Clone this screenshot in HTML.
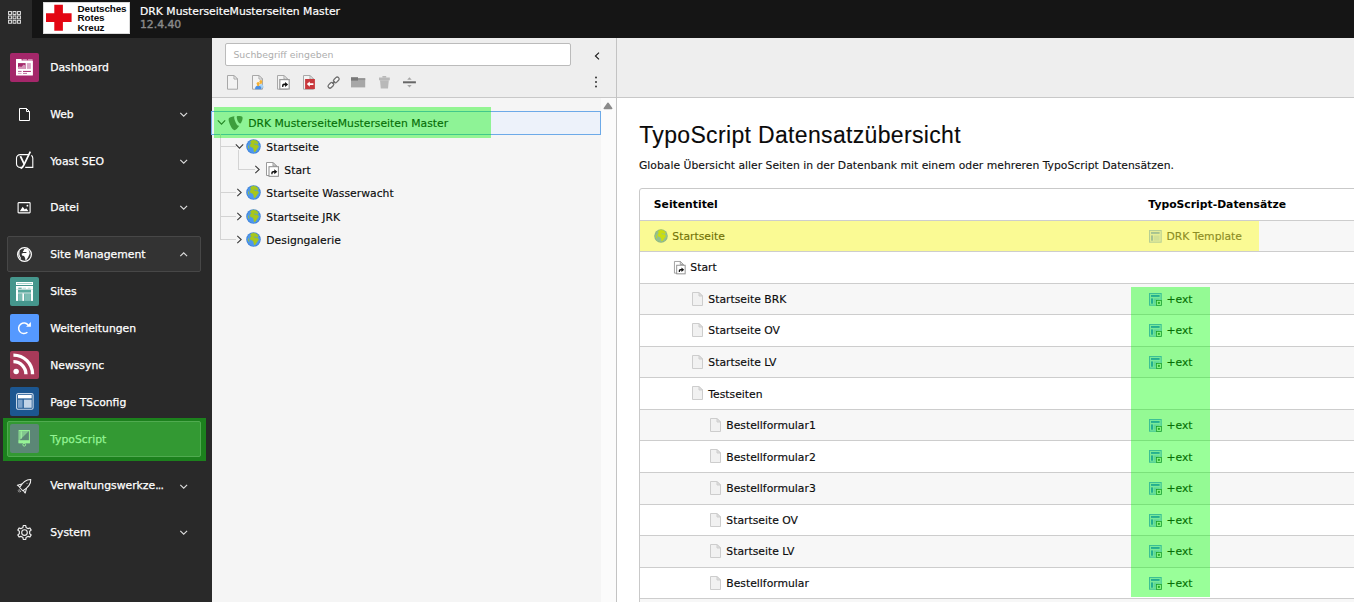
<!DOCTYPE html>
<html lang="de">
<head>
<meta charset="utf-8">
<title>TypoScript Datensatzübersicht</title>
<style>
*{box-sizing:border-box;margin:0;padding:0}
html,body{width:1354px;height:602px;overflow:hidden;background:#fff}
body{font-family:"DejaVu Sans","Liberation Sans",sans-serif;font-size:10.8px;color:#000;position:relative}
.abs{position:absolute}
svg{display:block;overflow:visible}
.hl{position:absolute;pointer-events:none}
#topbar{position:absolute;left:0;top:0;width:1354px;height:38px;background:#151515}
#toggle{position:absolute;left:0;top:0;width:32px;height:38px;background:#292929}
#logo{position:absolute;left:43px;top:2px;width:87px;height:32px;background:#fff;border:1px solid #dadada}
#logo .txt{position:absolute;left:33.600px;top:1.1px;font-family:"Liberation Sans",sans-serif;font-weight:700;font-size:9.9px;line-height:9.450px;color:#0a0a0a;white-space:nowrap;letter-spacing:-.12px}
#sitename{position:absolute;left:140px;top:4.500px;color:#fff;line-height:13px;white-space:nowrap;-webkit-text-stroke:.2px #fff}
#version{position:absolute;left:140px;top:17.800px;color:#8a8a8a;line-height:13px;-webkit-text-stroke:.4px #8a8a8a}
#sidebar{position:absolute;left:0;top:38px;width:212px;height:564px;background:#292929}
.mi{position:absolute;left:0;width:212px;height:28.700px;white-space:nowrap}
.mi .ic{position:absolute;left:10.100px;top:0;width:28.800px;height:28.700px;border-radius:2px}
.mi .lb{position:absolute;left:50.200px;top:1.300px;line-height:28.700px;-webkit-text-stroke:.25px currentColor}
#smbox{position:absolute;left:7px;top:198.200px;width:194px;height:35.400px;background:#333;border:1px solid #474747;border-radius:2px}
#actbox{position:absolute;left:7px;top:383px;width:194px;height:35.600px;background:#339933;border:1px solid #50ab50;border-radius:2px}
#tree{position:absolute;left:212px;top:38px;width:405px;height:564px;background:#f5f5f5;border-right:1px solid #c3c3c3}
#treetop{position:absolute;left:0;top:0;width:404px;height:59.500px;background:#eeeeee;border-bottom:1px solid #c8c8c8}
#search{position:absolute;left:13px;top:5.300px;width:346px;height:22.400px;background:#fff;border:1px solid #bbb;border-radius:2px;color:#adadad;font-size:9.350px;line-height:21.600px;padding-left:7.400px}
.trow{position:absolute;height:23px;line-height:23px;white-space:nowrap;color:#0c0c0c;-webkit-text-stroke:.15px currentColor}
#content{position:absolute;left:617px;top:38px;width:737px;height:564px;background:#fff}
#dochead{position:absolute;left:0;top:0;width:737px;height:59.500px;background:#eeeeee;border-bottom:1px solid #c8c8c8}
h1{position:absolute;left:22.200px;top:82.700px;font-family:"Liberation Sans",sans-serif;font-weight:400;font-size:23px;line-height:28px;color:#0a0a0a;white-space:nowrap;letter-spacing:.34px;-webkit-text-stroke:.12px #0a0a0a}
#sub{position:absolute;left:22px;top:121px;line-height:14px;white-space:nowrap;color:#111;-webkit-text-stroke:.12px currentColor}
#tbl{position:absolute;left:22px;top:150px;width:730px;height:460px;border:1px solid #c9c9c9;border-radius:3px 0 0 0;background:#fff;overflow:hidden}
.th{position:absolute;top:0;line-height:31.400px;font-weight:700;white-space:nowrap;color:#000}
.r{position:absolute;left:0;width:728px;height:32px;border-top:1px solid #cdcdcd;white-space:nowrap;background:#fff}
.r.odd{background:#f7f7f7}
.r .t{position:absolute;top:0;line-height:31.400px;color:#0c0c0c;-webkit-text-stroke:.15px currentColor}
</style>
</head>
<body>
<div id="topbar">
  <div id="toggle"><svg class="abs" style="left:8px;top:11px" width="14" height="14" viewBox="0 0 14 14" ><rect x="0.55" y="0.55" width="2.900" height="2.900" fill="#383838" stroke="#e2e2e2" stroke-width=".95"/><rect x="0.55" y="4.95" width="2.900" height="2.900" fill="#383838" stroke="#e2e2e2" stroke-width=".95"/><rect x="0.55" y="9.35" width="2.900" height="2.900" fill="#383838" stroke="#e2e2e2" stroke-width=".95"/><rect x="5.05" y="0.55" width="2.900" height="2.900" fill="#383838" stroke="#e2e2e2" stroke-width=".95"/><rect x="5.05" y="4.95" width="2.900" height="2.900" fill="#383838" stroke="#e2e2e2" stroke-width=".95"/><rect x="5.05" y="9.35" width="2.900" height="2.900" fill="#383838" stroke="#e2e2e2" stroke-width=".95"/><rect x="9.55" y="0.55" width="2.900" height="2.900" fill="#383838" stroke="#e2e2e2" stroke-width=".95"/><rect x="9.55" y="4.95" width="2.900" height="2.900" fill="#383838" stroke="#e2e2e2" stroke-width=".95"/><rect x="9.55" y="9.35" width="2.900" height="2.900" fill="#383838" stroke="#e2e2e2" stroke-width=".95"/></svg></div>
  <div id="logo"><svg class="abs" style="left:1px;top:1px" width="27" height="27" viewBox="0 0 27 27" ><path d="M9.300 0.700h8.600v8.500h8.700v8.800h-8.700v8.800H9.300v-8.800H1v-8.800h8.300z" fill="#e30613" transform="translate(0,0)"/></svg><div class="txt">Deutsches<br><span style="position:relative;top:-1px">Rotes</span><br>Kreuz</div></div>
  <div id="sitename">DRK MusterseiteMusterseiten Master</div>
  <div id="version">12.4.40</div>
</div>
<div id="sidebar">
<div class="mi" style="top:14.950000000000003px"><div class="ic" style="background:#a4276a;"><svg class="abs" style="left:5.9px;top:6px" width="17" height="17" viewBox="0 0 17 17" ><rect x="0" y="0" width="5.600" height="2" fill="#fff"/><rect x="6.600" y="0.300" width="4.300" height="1" fill="#e3b6cf"/><rect x="12" y="0.300" width="4.600" height="1" fill="#e3b6cf"/><rect x="0" y="1.600" width="16.900" height="15" rx=".5" fill="#fff"/><rect x="2" y="4.100" width="7.600" height="5.800" fill="#a4276a"/><path d="M2 9.900V8.200L3.600 7.300 5.200 8 7.700 5.600 9.600 6.600V9.900Z" fill="#d596b9"/><rect x="10.900" y="4.100" width="4" height="5.800" fill="#dba6c6"/><rect x="2" y="11.900" width="3.600" height="1" fill="#b55a90"/><rect x="7" y="11.900" width="7.900" height="1" fill="#a4276a"/><rect x="2" y="13.900" width="3.600" height="1" fill="#dba6c6"/><rect x="7" y="13.900" width="4" height="1" fill="#c070a0"/></svg></div><div class="lb" style="color:#fff;margin-top:0px">Dashboard</div></div>
<div class="mi" style="top:61.650000000000006px"><div class="ic" style=""><svg class="abs" style="left:8.9px;top:8.6px" width="12" height="14" viewBox="0 0 12 14" ><path d="M0.500 0.500H7.500L10.500 3.500V12.500H0.500Z" fill="none" stroke="#fff" stroke-width="1"/><path d="M7.500 0.500V3.500H10.500" fill="none" stroke="#fff" stroke-width="1"/></svg></div><div class="lb" style="color:#fff;margin-top:0px">Web</div></div><svg class="abs" style="left:178.5px;top:72.85000000000001px" width="10" height="8" viewBox="0 0 10 8" ><path d="M1.300 1.800L4.700 5.200L8.100 1.800" fill="none" stroke="#dcdcdc" stroke-width="1.150"/></svg>
<div class="mi" style="top:108.35px"><div class="ic" style=""><svg class="abs" style="left:4.9px;top:3.7px" width="19" height="20" viewBox="0 0 19 20" ><path d="M13.300 4.600H5.200a3.700 3.700 0 0 0-3.700 3.700V13.700a3.700 3.700 0 0 0 3.700 3.700H6.300M10.200 17.400H17.800V8.300c0-1.400-.5-2.400-1.400-3.100" fill="none" stroke="#fff" stroke-width="1.100"/><path d="M5.400 6.200L9.100 13.900" fill="none" stroke="#fff" stroke-width="1.800"/><path d="M15.300 1.600L9.200 14.300C8.300 16.300 7.500 17.600 5.600 18.500" fill="none" stroke="#fff" stroke-width="1.700"/></svg></div><div class="lb" style="color:#fff;margin-top:0px">Yoast SEO</div></div><svg class="abs" style="left:178.5px;top:119.55px" width="10" height="8" viewBox="0 0 10 8" ><path d="M1.300 1.800L4.700 5.200L8.100 1.800" fill="none" stroke="#dcdcdc" stroke-width="1.150"/></svg>
<div class="mi" style="top:155.05px"><div class="ic" style=""><svg class="abs" style="left:7.3px;top:8.7px" width="14" height="12" viewBox="0 0 14 12" ><rect x="1.100" y="0.600" width="12" height="10.300" rx="0.600" fill="none" stroke="#fff" stroke-width="1.100"/><path d="M2.800 9.200L5.700 4.800 7.800 7.600 9.200 6.300 11.500 9.200Z" fill="#fff"/><circle cx="10.400" cy="3.700" r=".9" fill="#fff"/></svg></div><div class="lb" style="color:#fff;margin-top:0px">Datei</div></div><svg class="abs" style="left:178.5px;top:166.25px" width="10" height="8" viewBox="0 0 10 8" ><path d="M1.300 1.800L4.700 5.200L8.100 1.800" fill="none" stroke="#dcdcdc" stroke-width="1.150"/></svg>
<div id="smbox"></div>
<div class="mi" style="top:201.65px"><div class="ic" style=""><svg class="abs" style="left:6.8px;top:7.2px" width="15" height="15" viewBox="0 0 15 15" ><circle cx="7.500" cy="7.500" r="6.850" fill="none" stroke="#fff" stroke-width="1.250"/><path d="M6.900 2.200L8.700 1.700 11.200 2.300 12.300 4.400 12.700 6.600 12 8.200 11 10.400 9.500 12.700 8.400 13.300 8.100 11.100 7 9.100 5.050 8.600 4.600 6.800 6.050 6.100 9.300 5.900 9.500 5.100 6.050 5 5.800 4.400 7 2.900Z" fill="#fff"/><path d="M2.200 4.200Q1.100 8 3.700 11.600" fill="none" stroke="#fff" stroke-width="1.100"/></svg></div><div class="lb" style="color:#fff;margin-top:0px">Site Management</div></div><svg class="abs" style="left:178.5px;top:212.85px" width="10" height="8" viewBox="0 0 10 8" ><path d="M1.300 5.200L4.700 1.800L8.100 5.200" fill="none" stroke="#dcdcdc" stroke-width="1.150"/></svg>
<div class="mi" style="top:239.0px"><div class="ic" style="background:#45968c;"><svg class="abs" style="left:5.9px;top:5px" width="17" height="19" viewBox="0 0 17 19" ><rect x="0" y="0" width="17" height="3" fill="#fff"/><rect x="1" y="1" width="15" height="1" fill="#a5d3cb"/><rect x="0" y="4" width="17" height="3.700" fill="#fff"/><rect x="2.300" y="5.700" width="3.400" height="1" fill="#45968c"/><rect x="6.500" y="5.700" width="3.500" height="1" fill="#b9dcd6"/><rect x="11.800" y="5.700" width="2.800" height="1" fill="#b9dcd6"/><rect x="0" y="7.600" width="2" height="11.300" fill="#fff"/><rect x="15" y="7.600" width="2" height="11.300" fill="#fff"/><rect x="2" y="7.900" width="13" height="2.700" fill="#58a89d"/><rect x="0" y="10.600" width="17" height="1" fill="#fff"/><rect x="2.200" y="11.600" width="3.900" height="7.300" fill="#7cbcb3"/><rect x="6.300" y="11.600" width="1.700" height="7.300" fill="#fff"/><rect x="8.300" y="11.600" width="6.500" height="7.300" fill="#7cbcb3"/></svg></div><div class="lb" style="color:#fff;margin-top:0px">Sites</div></div>
<div class="mi" style="top:275.75px"><div class="ic" style="background:#5599ff;"><svg class="abs" style="left:5.9px;top:6px" width="17" height="17" viewBox="0 0 17 17" ><path d="M12.300 5.300A5.300 5.300 0 1 0 11.400 12.300" fill="none" stroke="#fff" stroke-width="1.500"/><path d="M14.900 1.900V6.800H10.100Z" fill="#fff"/></svg></div><div class="lb" style="color:#fff;margin-top:0px">Weiterleitungen</div></div>
<div class="mi" style="top:312.5px"><div class="ic" style="background:#a83a59;"><svg class="abs" style="left:2.3px;top:2.8px" width="22.6" height="22.6" viewBox="0 0 24 24" ><circle cx="4.400" cy="19.600" r="2.900" fill="#fff"/><path d="M1.500 9.200a13.300 13.300 0 0 1 13.300 13.300" fill="none" stroke="#fff" stroke-width="3.600"/><path d="M1.500 2.200a20.300 20.300 0 0 1 20.300 20.300" fill="none" stroke="#fff" stroke-width="3.600"/></svg></div><div class="lb" style="color:#fff;margin-top:0px">Newssync</div></div>
<div class="mi" style="top:349.15px"><div class="ic" style="background:#1c5690;"><svg class="abs" style="left:5.5px;top:6px" width="18" height="17" viewBox="0 0 18 17" ><rect x="0.600" y="0.600" width="16.500" height="15.600" rx="1.500" fill="none" stroke="#c9d8ea" stroke-width="1.100"/><rect x="2" y="2" width="13.700" height="3.400" fill="#fff"/><rect x="2" y="6.600" width="4.600" height="8.200" fill="#7ea3cc"/><rect x="7.800" y="6.600" width="7.900" height="8.200" fill="#c3d4e8"/></svg></div><div class="lb" style="color:#fff;margin-top:1px">Page TSconfig</div></div>
<div class="abs" style="left:3px;top:380px;width:203px;height:43px;background:#1c811d"></div>
<div id="actbox"></div>
<div class="mi" style="top:385.95px"><div class="ic" style="background:#5c8776;"><svg class="abs" style="left:8.4px;top:5.6px" width="12" height="18" viewBox="0 0 12 18" ><rect x="1.100" y="0.500" width="10.300" height="12.300" fill="none" stroke="#96f296" stroke-width="1"/><path d="M1.600 1H11L1.600 10.300Z" fill="#8fdc97" fill-opacity=".75"/><rect x="2.700" y="1.300" width="1" height="7.300" fill="#a4f7a4"/><rect x="0.600" y="10.200" width="11.300" height="2.900" fill="#96f296"/><circle cx="6.250" cy="14.700" r="1.400" fill="none" stroke="#96f296" stroke-width="1"/></svg></div><div class="lb" style="color:#93f393;margin-top:1px">TypoScript</div></div>
<div class="mi" style="top:433.45px"><div class="ic" style=""><svg class="abs" style="left:6px;top:7.3px" width="17" height="17" viewBox="0 0 17 17" ><g transform="translate(9.500,5.900) rotate(45)" fill="none" stroke="#f2f2f2" stroke-width="1" stroke-linejoin="round"><path d="M0-7.500C3.100-4.700 3.600 1 2.300 6H-2.300C-3.600 1-3.100-4.700 0-7.500Z"/><path d="M-3.200 1.800L-5.600 6-2.400 5.500"/><path d="M3.200 1.800L5.600 6 2.400 5.500"/><circle cx="0" cy="-2.200" r=".6" fill="#aaa" stroke="none"/><path d="M-1.200 7.300V9.300M1.200 7.300V9.300M0 7.300V10.200" stroke-width=".8" stroke="#cfcfcf"/></g></svg></div><div class="lb" style="color:#fff;margin-top:-1px">Verwaltungswerkze<span style="letter-spacing:-.7px">...</span></div></div><svg class="abs" style="left:178.5px;top:444.65px" width="10" height="8" viewBox="0 0 10 8" ><path d="M1.300 1.800L4.700 5.200L8.100 1.800" fill="none" stroke="#dcdcdc" stroke-width="1.150"/></svg>
<div class="mi" style="top:480.15px"><div class="ic" style=""><svg class="abs" style="left:5.7px;top:5.7px" width="17" height="17" viewBox="0 0 17 17" ><path d="M7.24 1.51L9.76 1.51L10.03 3.43L12.13 4.64L13.92 3.92L15.18 6.09L13.66 7.29L13.66 9.71L15.18 10.91L13.92 13.08L12.13 12.36L10.03 13.57L9.76 15.49L7.24 15.49L6.97 13.57L4.87 12.36L3.08 13.08L1.82 10.91L3.34 9.71L3.34 7.29L1.82 6.09L3.08 3.92L4.87 4.64L6.97 3.43Z" fill="none" stroke="#f0f0f0" stroke-width="1.150" stroke-linejoin="round"/><circle cx="8.500" cy="8.500" r="2.800" fill="none" stroke="#f0f0f0" stroke-width="1.150"/></svg></div><div class="lb" style="color:#fff;margin-top:0px">System</div></div><svg class="abs" style="left:178.5px;top:491.34999999999997px" width="10" height="8" viewBox="0 0 10 8" ><path d="M1.300 1.800L4.700 5.200L8.100 1.800" fill="none" stroke="#dcdcdc" stroke-width="1.150"/></svg>
</div>
<div id="tree"><div id="treetop"><div id="search">Suchbegriff eingeben</div></div>
<svg class="abs" style="left:15px;top:37.400000000000006px" width="11" height="14" viewBox="0 0 11 14" ><path d="M0.500 0.500H7L10.500 4V14.2H0.500Z" fill="#f3f3f3" stroke="#a8a8a8" stroke-width="1"/><path d="M7 0.500V4H10.500Z" fill="#fbfbfb" stroke="#a8a8a8" stroke-width="1" stroke-linejoin="round"/></svg>
<svg class="abs" style="left:40px;top:37.400000000000006px" width="13" height="15" viewBox="0 0 13 15" ><path d="M0.500 0.500H7L10.500 4V14.2H0.500Z" fill="#f3f3f3" stroke="#a8a8a8" stroke-width="1"/><path d="M7 0.500V4H10.500Z" fill="#fbfbfb" stroke="#a8a8a8" stroke-width="1" stroke-linejoin="round"/><path d="M7.300 12.800c0-2.600.7-3.900 1.700-3.900s2.800 1.200 2.800 3.900z" fill="#a9d3f4"/><circle cx="8.900" cy="6.600" r="1.500" fill="#f4b136"/><rect x="8.100" y="6.600" width="1.600" height="2.400" fill="#f4b136"/><path d="M3 14.300c0-2.700 1.300-3.800 3.200-3.800s3.400 1.100 3.400 3.800z" fill="#4a8fe4"/><circle cx="6.200" cy="8.500" r="1.600" fill="#f4b136"/><rect x="5.300" y="8.600" width="1.800" height="2.500" fill="#f4b136"/></svg>
<svg class="abs" style="left:65px;top:37.400000000000006px" width="13" height="15" viewBox="0 0 13 15" ><path d="M0.500 0.500H7L10.500 4V14.2H0.500Z" fill="#f3f3f3" stroke="#a8a8a8" stroke-width="1"/><path d="M7 0.500V4H10.500Z" fill="#fbfbfb" stroke="#a8a8a8" stroke-width="1" stroke-linejoin="round"/><rect x="2.800" y="4.600" width="9.400" height="9.400" fill="#fff" stroke="#9a9a9a" stroke-width="1.200"/><path d="M5.100 12v-1.500c0-1.100.8-1.900 1.900-1.900H8.100V6.900L11.100 9.400 8.100 11.900V10.200H7.200c-.5 0-.8.300-.8.800v1z" fill="#111"/></svg>
<svg class="abs" style="left:91px;top:37.400000000000006px" width="13" height="15" viewBox="0 0 13 15" ><path d="M0.500 0.500H7L10.500 4V14.2H0.500Z" fill="#f3f3f3" stroke="#a8a8a8" stroke-width="1"/><path d="M7 0.500V4H10.500Z" fill="#fbfbfb" stroke="#a8a8a8" stroke-width="1" stroke-linejoin="round"/><rect x="2.100" y="4" width="9.800" height="10.100" fill="#c8383c"/><path d="M3.800 9.100L6.800 6.500V8.300h3.600v1.600H6.800v1.800z" fill="#fff"/></svg>
<svg class="abs" style="left:114.5px;top:37.599999999999994px" width="13" height="13" viewBox="0 0 13 13" ><g fill="#f6f6f6" stroke="#6e6e6e" stroke-width="1.300"><rect x="-3.200" y="-1.900" width="6.400" height="3.800" rx="1.900" transform="translate(3.900,9.300) rotate(-45)"/><rect x="-3.200" y="-1.900" width="6.400" height="3.800" rx="1.900" transform="translate(9.300,3.900) rotate(-45)"/></g><path d="M5.300 7.900L7.900 5.300" stroke="#6e6e6e" stroke-width="1.300" fill="none"/></svg>
<svg class="abs" style="left:139px;top:39px" width="15" height="11" viewBox="0 0 15 11" ><rect x="0" y="1.200" width="14.200" height="9.200" fill="#a7a7a7"/><rect x="0" y="0.200" width="7" height="3.400" fill="#787878"/><rect x="7" y="1.200" width="7.200" height="1.900" fill="#939393"/></svg>
<svg class="abs" style="left:166.8px;top:37.900000000000006px" width="12" height="13" viewBox="0 0 12 13" ><rect x="3.400" y="0" width="3.800" height="1.700" fill="#b9b9b9"/><rect x="0" y="1.500" width="10.800" height="2.800" fill="#b9b9b9"/><path d="M1 4.300H9.800L9 12.600H1.800Z" fill="#b9b9b9"/></svg>
<svg class="abs" style="left:190.89999999999998px;top:38.8px" width="13" height="12" viewBox="0 0 13 12" ><rect x="0" y="4.300" width="12.900" height="2" fill="#666"/><path d="M4.200 2.800L6.450 0.200 8.700 2.800Z" fill="#a6a6a6"/><path d="M4.200 8L6.450 10.600 8.700 8Z" fill="#a6a6a6"/></svg>
<svg class="abs" style="left:381.5px;top:13px" width="7" height="10" viewBox="0 0 7 10" ><path d="M5 1.600L1.400 5 5 8.400" fill="none" stroke="#1a1a1a" stroke-width="1.100"/></svg>
<svg class="abs" style="left:382px;top:38px" width="4" height="12" viewBox="0 0 4 12" ><circle cx="2" cy="1.400" r="1" fill="#333"/><circle cx="2" cy="6" r="1" fill="#333"/><circle cx="2" cy="10.600" r="1" fill="#333"/></svg>
<div class="abs" style="left:389px;top:60px;width:15px;height:504px;background:#fbfbfb"></div>
<svg class="abs" style="left:391.4px;top:64.4px" width="10" height="8" viewBox="0 0 10 8" ><path d="M1.300 6.500L5 1.300 8.700 6.500Z" fill="#8b8b8b" stroke="#8b8b8b" stroke-width="1.500" stroke-linejoin="round"/></svg>
<div class="abs" style="left:-1px;top:73px;width:390px;height:23.500px;background:#edf2fa;border:1px solid #6daae8"></div>
<div class="abs" style="left:8px;top:96px;width:1px;height:106.1px;background:#d3d3d3"></div>
<div class="abs" style="left:8px;top:107.7px;width:16px;height:1px;background:#d3d3d3"></div>
<div class="abs" style="left:8px;top:154.3px;width:16px;height:1px;background:#d3d3d3"></div>
<div class="abs" style="left:8px;top:177.7px;width:16px;height:1px;background:#d3d3d3"></div>
<div class="abs" style="left:8px;top:201.1px;width:16px;height:1px;background:#d3d3d3"></div>
<div class="abs" style="left:25.500px;top:112px;width:1px;height:20px;background:#d3d3d3"></div>
<div class="abs" style="left:25.500px;top:131.0px;width:17px;height:1px;background:#d3d3d3"></div>
<svg class="abs" style="left:4.5px;top:81.2px" width="9" height="7" viewBox="0 0 9 7" ><path d="M0.800 1.300L4.500 5.200 8.200 1.300" fill="none" stroke="#383838" stroke-width="1.050"/></svg><svg class="abs" style="left:14.8px;top:77.0px" width="16.6" height="16.6" viewBox="0 0 16 16" ><path d="M11.786 10.395c-.204.060-.366.083-.580.083-1.739 0-4.291-6.077-4.291-8.099 0-.744.176-.992.425-1.206C5.211 1.420 2.658 2.202 1.842 3.194c-.176.250-.283.639-.283 1.135 0 3.155 3.368 10.316 5.744 10.316 1.099 0 2.953-1.807 4.483-4.250M10.673 1c2.198 0 4.397.354 4.397 1.595 0 2.517-1.596 5.567-2.411 5.567-1.454 0-3.263-4.042-3.263-6.063 0-.921.354-1.099 1.277-1.099" fill="#666"/></svg><div class="trow" style="left:36.19999999999999px;top:74.1px">DRK MusterseiteMusterseiten Master</div>
<svg class="abs" style="left:22.599999999999994px;top:104.6px" width="9" height="7" viewBox="0 0 9 7" ><path d="M0.800 1.300L4.500 5.200 8.200 1.300" fill="none" stroke="#383838" stroke-width="1.050"/></svg><svg class="abs" style="left:34px;top:100.6px" width="15" height="15" viewBox="0 0 15 15" ><circle cx="7.500" cy="7.500" r="7.250" fill="#3f82d8"/><circle cx="7.500" cy="7.500" r="6.500" fill="#4d97ee"/><path d="M5 2L7.600 1 10.800 2.100 12.200 3.900 11.300 5.400 10 4.600 8.800 4.300 7.800 4.800 8.200 5.800 11.600 6.200 12.600 7.600 10.800 10 9.300 12.400 8.200 12.800 7.800 10.100 6.600 8.300 4.600 7.700 4.100 5.800 5.400 4.200 4.600 2.900Z" fill="#a8c71a" stroke="#a8c71a" stroke-width=".6" stroke-linejoin="round"/><path d="M2.100 5.800L3.100 7.600 3.300 10.300 2.300 8.900Z" fill="#a8c71a"/></svg><div class="trow" style="left:54.30000000000001px;top:97.5px">Startseite</div>
<svg class="abs" style="left:42.30000000000001px;top:127.0px" width="7" height="9" viewBox="0 0 7 9" ><path d="M1.300 0.800L5.200 4.500 1.300 8.200" fill="none" stroke="#383838" stroke-width="1.050"/></svg><svg class="abs" style="left:54px;top:124.2px" width="13" height="15" viewBox="0 0 13 15" ><path d="M0.500 0.500H7L10.500 4V13.5H0.500Z" fill="#fff" stroke="#9a9a9a" stroke-width="1"/><path d="M7 0.500V4H10.500Z" fill="#e2e2e2" stroke="#9a9a9a" stroke-width="1" stroke-linejoin="round"/><rect x="3" y="4.700" width="9.400" height="9.600" fill="#fff" stroke="#8a8a8a" stroke-width="1"/><path d="M5.300 12.300v-1.500c0-1.100.8-1.900 1.900-1.900H8.300V7.200L11.300 9.700 8.300 12.200V10.500H7.400c-.5 0-.8.300-.8.800v1z" fill="#111"/></svg><div class="trow" style="left:72.30000000000001px;top:120.9px">Start</div>
<svg class="abs" style="left:24.19999999999999px;top:150.3px" width="7" height="9" viewBox="0 0 7 9" ><path d="M1.300 0.800L5.200 4.500 1.300 8.200" fill="none" stroke="#383838" stroke-width="1.050"/></svg><svg class="abs" style="left:34px;top:147.3px" width="15" height="15" viewBox="0 0 15 15" ><circle cx="7.500" cy="7.500" r="7.250" fill="#3f82d8"/><circle cx="7.500" cy="7.500" r="6.500" fill="#4d97ee"/><path d="M5 2L7.600 1 10.800 2.100 12.200 3.900 11.300 5.400 10 4.600 8.800 4.300 7.800 4.800 8.200 5.800 11.600 6.200 12.600 7.600 10.800 10 9.300 12.400 8.200 12.800 7.800 10.100 6.600 8.300 4.600 7.700 4.100 5.800 5.400 4.200 4.600 2.900Z" fill="#a8c71a" stroke="#a8c71a" stroke-width=".6" stroke-linejoin="round"/><path d="M2.100 5.800L3.100 7.600 3.300 10.300 2.300 8.900Z" fill="#a8c71a"/></svg><div class="trow" style="left:54.30000000000001px;top:144.2px">Startseite Wasserwacht</div>
<svg class="abs" style="left:24.19999999999999px;top:173.7px" width="7" height="9" viewBox="0 0 7 9" ><path d="M1.300 0.800L5.200 4.500 1.300 8.200" fill="none" stroke="#383838" stroke-width="1.050"/></svg><svg class="abs" style="left:34px;top:170.7px" width="15" height="15" viewBox="0 0 15 15" ><circle cx="7.500" cy="7.500" r="7.250" fill="#3f82d8"/><circle cx="7.500" cy="7.500" r="6.500" fill="#4d97ee"/><path d="M5 2L7.600 1 10.800 2.100 12.200 3.900 11.300 5.400 10 4.600 8.800 4.300 7.800 4.800 8.200 5.800 11.600 6.200 12.600 7.600 10.800 10 9.300 12.400 8.200 12.800 7.800 10.100 6.600 8.300 4.600 7.700 4.100 5.800 5.400 4.200 4.600 2.900Z" fill="#a8c71a" stroke="#a8c71a" stroke-width=".6" stroke-linejoin="round"/><path d="M2.100 5.800L3.100 7.600 3.300 10.300 2.300 8.900Z" fill="#a8c71a"/></svg><div class="trow" style="left:54.30000000000001px;top:167.6px">Startseite JRK</div>
<svg class="abs" style="left:24.19999999999999px;top:197.1px" width="7" height="9" viewBox="0 0 7 9" ><path d="M1.300 0.800L5.200 4.500 1.300 8.200" fill="none" stroke="#383838" stroke-width="1.050"/></svg><svg class="abs" style="left:34px;top:194.1px" width="15" height="15" viewBox="0 0 15 15" ><circle cx="7.500" cy="7.500" r="7.250" fill="#3f82d8"/><circle cx="7.500" cy="7.500" r="6.500" fill="#4d97ee"/><path d="M5 2L7.600 1 10.800 2.100 12.200 3.900 11.300 5.400 10 4.600 8.800 4.300 7.800 4.800 8.200 5.800 11.600 6.200 12.600 7.600 10.800 10 9.300 12.400 8.200 12.800 7.800 10.100 6.600 8.300 4.600 7.700 4.100 5.800 5.400 4.200 4.600 2.900Z" fill="#a8c71a" stroke="#a8c71a" stroke-width=".6" stroke-linejoin="round"/><path d="M2.100 5.800L3.100 7.600 3.300 10.300 2.300 8.900Z" fill="#a8c71a"/></svg><div class="trow" style="left:54.30000000000001px;top:191.0px">Designgalerie</div>
<div class="hl" style="left:2px;top:69px;width:277px;height:31px;background:rgba(0,245,0,.4)"></div>
</div>
<div id="content">
  <div id="dochead"></div>
  <h1>TypoScript Datensatzübersicht</h1>
  <div id="sub">Globale Übersicht aller Seiten in der Datenbank mit einem oder mehreren TypoScript Datensätzen.</div>
  <div id="tbl">
<div class="th" style="left:13.799999999999955px">Seitentitel</div>
<div class="th" style="left:508.29999999999995px">TypoScript-Datensätze</div>
<div class="r odd" style="top:31.00px"><svg class="abs" style="left:14.100000000000023px;top:8.3px" width="14" height="14" viewBox="0 0 15 15" ><circle cx="7.500" cy="7.500" r="7.250" fill="#3f82d8"/><circle cx="7.500" cy="7.500" r="6.500" fill="#4d97ee"/><path d="M5 2L7.600 1 10.800 2.100 12.200 3.900 11.300 5.400 10 4.600 8.800 4.300 7.800 4.800 8.200 5.800 11.600 6.200 12.600 7.600 10.800 10 9.300 12.400 8.200 12.800 7.800 10.100 6.600 8.300 4.600 7.700 4.100 5.800 5.400 4.200 4.600 2.900Z" fill="#a8c71a" stroke="#a8c71a" stroke-width=".6" stroke-linejoin="round"/><path d="M2.100 5.800L3.100 7.600 3.300 10.300 2.300 8.900Z" fill="#a8c71a"/></svg><div class="t" style="left:32.3px;margin-top:0px">Startseite</div><svg class="abs" style="left:509.09999999999997px;top:9.100000000000001px" width="13" height="13" viewBox="0 0 13 13" ><g opacity="0.75"><rect x="0.500" y="0.500" width="11.700" height="11.700" fill="#c9dcfd" stroke="#6497f7" stroke-width="1"/><rect x="2" y="2" width="8.600" height="1.900" fill="#3d7aee"/><rect x="2" y="5.400" width="2.100" height="5.300" fill="#3d7aee"/><rect x="5" y="5.400" width="5.600" height="5.300" fill="#9dbdf9"/></g></svg><div class="t" style="left:526.4px;color:#404040">DRK Template</div></div>
<div class="r" style="top:62.00px"><svg class="abs" style="left:33.60000000000002px;top:8.700000000000001px" width="11.7" height="13.5" viewBox="0 0 13 15" ><path d="M0.500 0.500H7L10.500 4V13.5H0.500Z" fill="#fff" stroke="#9a9a9a" stroke-width="1"/><path d="M7 0.500V4H10.500Z" fill="#e2e2e2" stroke="#9a9a9a" stroke-width="1" stroke-linejoin="round"/><rect x="3" y="4.700" width="9.400" height="9.600" fill="#fff" stroke="#8a8a8a" stroke-width="1"/><path d="M5.300 12.300v-1.500c0-1.100.8-1.900 1.900-1.900H8.300V7.200L11.300 9.700 8.300 12.200V10.500H7.400c-.5 0-.8.300-.8.800v1z" fill="#111"/></svg><div class="t" style="left:50.3px;margin-top:0px">Start</div></div>
<div class="r odd" style="top:94.00px"><svg class="abs" style="left:51.90000000000002px;top:8.3px" width="11" height="14" viewBox="0 0 11 14" ><path d="M0.500 0.500H7L10.500 4V13.5H0.500Z" fill="#f1f1f1" stroke="#cdcdcd" stroke-width="1"/><path d="M7 0.500V4H10.500Z" fill="#e0e0e0" stroke="#cdcdcd" stroke-width="1" stroke-linejoin="round"/></svg><div class="t" style="left:68.3px;margin-top:0px">Startseite BRK</div><svg class="abs" style="left:509.09999999999997px;top:9.100000000000001px" width="13" height="13" viewBox="0 0 13 13" ><g opacity="1"><rect x="0.500" y="0.500" width="11.700" height="11.700" fill="#c9dcfd" stroke="#6497f7" stroke-width="1"/><rect x="2" y="2" width="8.600" height="1.900" fill="#3d7aee"/><rect x="2" y="5.400" width="2.100" height="5.300" fill="#3d7aee"/><rect x="5" y="5.400" width="5.600" height="5.300" fill="#9dbdf9"/></g><rect x="7.500" y="7.500" width="4.800" height="4.800" fill="#e6f1e6" stroke="#265a2c" stroke-width=".7"/><path d="M9.900 8.800v2.200M8.800 9.900h2.200" stroke="#22602a" stroke-width="1"/></svg><div class="t" style="left:526.4px;margin-top:0px">+ext</div></div>
<div class="r" style="top:125.00px"><svg class="abs" style="left:51.90000000000002px;top:8.3px" width="11" height="14" viewBox="0 0 11 14" ><path d="M0.500 0.500H7L10.500 4V13.5H0.500Z" fill="#f1f1f1" stroke="#cdcdcd" stroke-width="1"/><path d="M7 0.500V4H10.500Z" fill="#e0e0e0" stroke="#cdcdcd" stroke-width="1" stroke-linejoin="round"/></svg><div class="t" style="left:68.3px;margin-top:0px">Startseite OV</div><svg class="abs" style="left:509.09999999999997px;top:9.100000000000001px" width="13" height="13" viewBox="0 0 13 13" ><g opacity="1"><rect x="0.500" y="0.500" width="11.700" height="11.700" fill="#c9dcfd" stroke="#6497f7" stroke-width="1"/><rect x="2" y="2" width="8.600" height="1.900" fill="#3d7aee"/><rect x="2" y="5.400" width="2.100" height="5.300" fill="#3d7aee"/><rect x="5" y="5.400" width="5.600" height="5.300" fill="#9dbdf9"/></g><rect x="7.500" y="7.500" width="4.800" height="4.800" fill="#e6f1e6" stroke="#265a2c" stroke-width=".7"/><path d="M9.900 8.800v2.200M8.800 9.900h2.200" stroke="#22602a" stroke-width="1"/></svg><div class="t" style="left:526.4px;margin-top:0px">+ext</div></div>
<div class="r odd" style="top:157.00px"><svg class="abs" style="left:51.90000000000002px;top:8.3px" width="11" height="14" viewBox="0 0 11 14" ><path d="M0.500 0.500H7L10.500 4V13.5H0.500Z" fill="#f1f1f1" stroke="#cdcdcd" stroke-width="1"/><path d="M7 0.500V4H10.500Z" fill="#e0e0e0" stroke="#cdcdcd" stroke-width="1" stroke-linejoin="round"/></svg><div class="t" style="left:68.3px;margin-top:0px">Startseite LV</div><svg class="abs" style="left:509.09999999999997px;top:9.100000000000001px" width="13" height="13" viewBox="0 0 13 13" ><g opacity="1"><rect x="0.500" y="0.500" width="11.700" height="11.700" fill="#c9dcfd" stroke="#6497f7" stroke-width="1"/><rect x="2" y="2" width="8.600" height="1.900" fill="#3d7aee"/><rect x="2" y="5.400" width="2.100" height="5.300" fill="#3d7aee"/><rect x="5" y="5.400" width="5.600" height="5.300" fill="#9dbdf9"/></g><rect x="7.500" y="7.500" width="4.800" height="4.800" fill="#e6f1e6" stroke="#265a2c" stroke-width=".7"/><path d="M9.900 8.800v2.200M8.800 9.900h2.200" stroke="#22602a" stroke-width="1"/></svg><div class="t" style="left:526.4px;margin-top:0px">+ext</div></div>
<div class="r" style="top:188.00px"><svg class="abs" style="left:51.90000000000002px;top:8.3px" width="11" height="14" viewBox="0 0 11 14" ><path d="M0.500 0.500H7L10.500 4V13.5H0.500Z" fill="#f1f1f1" stroke="#cdcdcd" stroke-width="1"/><path d="M7 0.500V4H10.500Z" fill="#e0e0e0" stroke="#cdcdcd" stroke-width="1" stroke-linejoin="round"/></svg><div class="t" style="left:68.3px;margin-top:1px">Testseiten</div></div>
<div class="r odd" style="top:220.00px"><svg class="abs" style="left:69.90000000000002px;top:8.3px" width="11" height="14" viewBox="0 0 11 14" ><path d="M0.500 0.500H7L10.500 4V13.5H0.500Z" fill="#f1f1f1" stroke="#cdcdcd" stroke-width="1"/><path d="M7 0.500V4H10.500Z" fill="#e0e0e0" stroke="#cdcdcd" stroke-width="1" stroke-linejoin="round"/></svg><div class="t" style="left:86.3px;margin-top:0px">Bestellformular1</div><svg class="abs" style="left:509.09999999999997px;top:9.100000000000001px" width="13" height="13" viewBox="0 0 13 13" ><g opacity="1"><rect x="0.500" y="0.500" width="11.700" height="11.700" fill="#c9dcfd" stroke="#6497f7" stroke-width="1"/><rect x="2" y="2" width="8.600" height="1.900" fill="#3d7aee"/><rect x="2" y="5.400" width="2.100" height="5.300" fill="#3d7aee"/><rect x="5" y="5.400" width="5.600" height="5.300" fill="#9dbdf9"/></g><rect x="7.500" y="7.500" width="4.800" height="4.800" fill="#e6f1e6" stroke="#265a2c" stroke-width=".7"/><path d="M9.900 8.800v2.200M8.800 9.900h2.200" stroke="#22602a" stroke-width="1"/></svg><div class="t" style="left:526.4px;margin-top:0px">+ext</div></div>
<div class="r" style="top:251.00px"><svg class="abs" style="left:69.90000000000002px;top:8.3px" width="11" height="14" viewBox="0 0 11 14" ><path d="M0.500 0.500H7L10.500 4V13.5H0.500Z" fill="#f1f1f1" stroke="#cdcdcd" stroke-width="1"/><path d="M7 0.500V4H10.500Z" fill="#e0e0e0" stroke="#cdcdcd" stroke-width="1" stroke-linejoin="round"/></svg><div class="t" style="left:86.3px;margin-top:1px">Bestellformular2</div><svg class="abs" style="left:509.09999999999997px;top:9.100000000000001px" width="13" height="13" viewBox="0 0 13 13" ><g opacity="1"><rect x="0.500" y="0.500" width="11.700" height="11.700" fill="#c9dcfd" stroke="#6497f7" stroke-width="1"/><rect x="2" y="2" width="8.600" height="1.900" fill="#3d7aee"/><rect x="2" y="5.400" width="2.100" height="5.300" fill="#3d7aee"/><rect x="5" y="5.400" width="5.600" height="5.300" fill="#9dbdf9"/></g><rect x="7.500" y="7.500" width="4.800" height="4.800" fill="#e6f1e6" stroke="#265a2c" stroke-width=".7"/><path d="M9.900 8.800v2.200M8.800 9.900h2.200" stroke="#22602a" stroke-width="1"/></svg><div class="t" style="left:526.4px;margin-top:1px">+ext</div></div>
<div class="r odd" style="top:283.00px"><svg class="abs" style="left:69.90000000000002px;top:8.3px" width="11" height="14" viewBox="0 0 11 14" ><path d="M0.500 0.500H7L10.500 4V13.5H0.500Z" fill="#f1f1f1" stroke="#cdcdcd" stroke-width="1"/><path d="M7 0.500V4H10.500Z" fill="#e0e0e0" stroke="#cdcdcd" stroke-width="1" stroke-linejoin="round"/></svg><div class="t" style="left:86.3px;margin-top:0px">Bestellformular3</div><svg class="abs" style="left:509.09999999999997px;top:9.100000000000001px" width="13" height="13" viewBox="0 0 13 13" ><g opacity="1"><rect x="0.500" y="0.500" width="11.700" height="11.700" fill="#c9dcfd" stroke="#6497f7" stroke-width="1"/><rect x="2" y="2" width="8.600" height="1.900" fill="#3d7aee"/><rect x="2" y="5.400" width="2.100" height="5.300" fill="#3d7aee"/><rect x="5" y="5.400" width="5.600" height="5.300" fill="#9dbdf9"/></g><rect x="7.500" y="7.500" width="4.800" height="4.800" fill="#e6f1e6" stroke="#265a2c" stroke-width=".7"/><path d="M9.900 8.800v2.200M8.800 9.900h2.200" stroke="#22602a" stroke-width="1"/></svg><div class="t" style="left:526.4px;margin-top:0px">+ext</div></div>
<div class="r" style="top:315.00px"><svg class="abs" style="left:69.90000000000002px;top:8.3px" width="11" height="14" viewBox="0 0 11 14" ><path d="M0.500 0.500H7L10.500 4V13.5H0.500Z" fill="#f1f1f1" stroke="#cdcdcd" stroke-width="1"/><path d="M7 0.500V4H10.500Z" fill="#e0e0e0" stroke="#cdcdcd" stroke-width="1" stroke-linejoin="round"/></svg><div class="t" style="left:86.3px;margin-top:0px">Startseite OV</div><svg class="abs" style="left:509.09999999999997px;top:9.100000000000001px" width="13" height="13" viewBox="0 0 13 13" ><g opacity="1"><rect x="0.500" y="0.500" width="11.700" height="11.700" fill="#c9dcfd" stroke="#6497f7" stroke-width="1"/><rect x="2" y="2" width="8.600" height="1.900" fill="#3d7aee"/><rect x="2" y="5.400" width="2.100" height="5.300" fill="#3d7aee"/><rect x="5" y="5.400" width="5.600" height="5.300" fill="#9dbdf9"/></g><rect x="7.500" y="7.500" width="4.800" height="4.800" fill="#e6f1e6" stroke="#265a2c" stroke-width=".7"/><path d="M9.900 8.800v2.200M8.800 9.900h2.200" stroke="#22602a" stroke-width="1"/></svg><div class="t" style="left:526.4px;margin-top:0px">+ext</div></div>
<div class="r odd" style="top:346.00px"><svg class="abs" style="left:69.90000000000002px;top:8.3px" width="11" height="14" viewBox="0 0 11 14" ><path d="M0.500 0.500H7L10.500 4V13.5H0.500Z" fill="#f1f1f1" stroke="#cdcdcd" stroke-width="1"/><path d="M7 0.500V4H10.500Z" fill="#e0e0e0" stroke="#cdcdcd" stroke-width="1" stroke-linejoin="round"/></svg><div class="t" style="left:86.3px;margin-top:0px">Startseite LV</div><svg class="abs" style="left:509.09999999999997px;top:9.100000000000001px" width="13" height="13" viewBox="0 0 13 13" ><g opacity="1"><rect x="0.500" y="0.500" width="11.700" height="11.700" fill="#c9dcfd" stroke="#6497f7" stroke-width="1"/><rect x="2" y="2" width="8.600" height="1.900" fill="#3d7aee"/><rect x="2" y="5.400" width="2.100" height="5.300" fill="#3d7aee"/><rect x="5" y="5.400" width="5.600" height="5.300" fill="#9dbdf9"/></g><rect x="7.500" y="7.500" width="4.800" height="4.800" fill="#e6f1e6" stroke="#265a2c" stroke-width=".7"/><path d="M9.900 8.800v2.200M8.800 9.900h2.200" stroke="#22602a" stroke-width="1"/></svg><div class="t" style="left:526.4px;margin-top:0px">+ext</div></div>
<div class="r" style="top:378.00px"><svg class="abs" style="left:69.90000000000002px;top:8.3px" width="11" height="14" viewBox="0 0 11 14" ><path d="M0.500 0.500H7L10.500 4V13.5H0.500Z" fill="#f1f1f1" stroke="#cdcdcd" stroke-width="1"/><path d="M7 0.500V4H10.500Z" fill="#e0e0e0" stroke="#cdcdcd" stroke-width="1" stroke-linejoin="round"/></svg><div class="t" style="left:86.3px;margin-top:0px">Bestellformular</div><svg class="abs" style="left:509.09999999999997px;top:9.100000000000001px" width="13" height="13" viewBox="0 0 13 13" ><g opacity="1"><rect x="0.500" y="0.500" width="11.700" height="11.700" fill="#c9dcfd" stroke="#6497f7" stroke-width="1"/><rect x="2" y="2" width="8.600" height="1.900" fill="#3d7aee"/><rect x="2" y="5.400" width="2.100" height="5.300" fill="#3d7aee"/><rect x="5" y="5.400" width="5.600" height="5.300" fill="#9dbdf9"/></g><rect x="7.500" y="7.500" width="4.800" height="4.800" fill="#e6f1e6" stroke="#265a2c" stroke-width=".7"/><path d="M9.900 8.800v2.200M8.800 9.900h2.200" stroke="#22602a" stroke-width="1"/></svg><div class="t" style="left:526.4px;margin-top:0px">+ext</div></div>
<div class="r odd" style="top:409.00px"></div>
  </div>
  <div class="hl" style="left:23.299999999999955px;top:182.6px;width:618.5px;height:30.600px;background:rgba(255,255,0,.4)"></div>
  <div class="hl" style="left:514.2px;top:249px;width:78.59999999999991px;height:309.5px;background:rgba(0,255,0,.4)"></div>
</div>
</body>
</html>
